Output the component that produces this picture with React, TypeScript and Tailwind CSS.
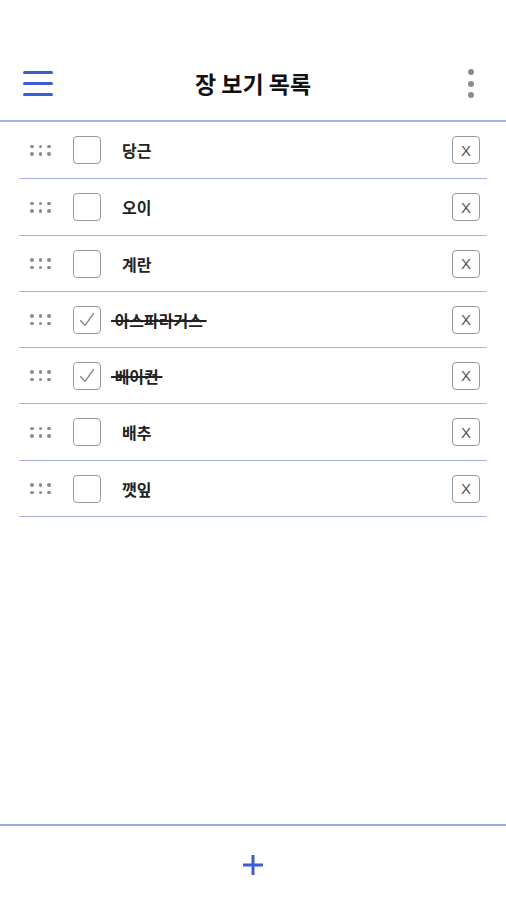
import { useState } from 'react'

type Item = { id: number; name: string; done: boolean }

const INITIAL: Item[] = [
  { id: 1, name: '당근', done: false },
  { id: 2, name: '오이', done: false },
  { id: 3, name: '계란', done: false },
  { id: 4, name: '아스파라거스', done: true },
  { id: 5, name: '베이컨', done: true },
  { id: 6, name: '배추', done: false },
  { id: 7, name: '깻잎', done: false },
]

const ROW_H = ['h-[57px]', 'h-[57px]', 'h-[56px]', 'h-[56px]', 'h-[56px]', 'h-[57px]', 'h-[56px]']

function DragHandle() {
  return (
    <div className="grid grid-cols-3 gap-x-[5px] gap-y-[4px] w-[21px] shrink-0">
      {[0, 1, 2, 3, 4, 5].map((i) => (
        <span key={i} className="w-[3.5px] h-[3.5px] rounded-full bg-[#8a8a8a]" />
      ))}
    </div>
  )
}

export default function App() {
  const [items, setItems] = useState<Item[]>(INITIAL)

  const toggle = (id: number) =>
    setItems((prev) => prev.map((it) => (it.id === id ? { ...it, done: !it.done } : it)))
  const remove = (id: number) => setItems((prev) => prev.filter((it) => it.id !== id))

  return (
    <div
      className="h-[900px] flex flex-col bg-white text-[#111]"
      style={{ fontFamily: '"Noto Sans CJK KR", "Noto Sans", sans-serif' }}
    >
      {/* ── Header ─────────────────────────────────────────────── */}
      <header className="mt-[47px] h-[75px] shrink-0 flex items-center px-[23px] border-b-2 border-[#a7b0e2]">
        <button className="w-[30px] flex flex-col gap-[8px]">
          <span className="block h-[3px] rounded-full bg-[#3d5bd6]" />
          <span className="block h-[3px] rounded-full bg-[#3d5bd6]" />
          <span className="block h-[3px] rounded-full bg-[#3d5bd6]" />
        </button>
        <h1 className="flex-1 text-center text-[23px] font-bold leading-none">장 보기 목록</h1>
        <button className="w-[30px] flex flex-col items-end gap-[5.5px] pr-[9px]">
          <span className="block w-[6px] h-[6px] rounded-full bg-[#8c8c8c]" />
          <span className="block w-[6px] h-[6px] rounded-full bg-[#8c8c8c]" />
          <span className="block w-[6px] h-[6px] rounded-full bg-[#8c8c8c]" />
        </button>
      </header>

      {/* ── List ───────────────────────────────────────────────── */}
      <ul className="flex-1 mx-[19px]">
        {items.map((it, i) => (
          <li key={it.id} className={`${ROW_H[i] ?? 'h-[56px]'} flex items-center border-b border-[#a9b1e3]`}>
            <div className="pl-[11px]">
              <DragHandle />
            </div>
            <button
              onClick={() => toggle(it.id)}
              className="ml-[22px] w-[28px] h-[28px] shrink-0 rounded-[4px] border-[1.5px] border-[#9a9a9a] flex items-center justify-center"
            >
              {it.done && (
                <svg width="20" height="20" viewBox="0 0 20 20" fill="none">
                  <path d="M3.5 10.5 L8 15.5 L16.5 3.5" stroke="#8a8a8a" strokeWidth="1.3" strokeLinecap="round" strokeLinejoin="round" />
                </svg>
              )}
            </button>
            {it.done ? (
              <span className="ml-[10px] flex-1 text-[16px] font-bold line-through decoration-[1.5px] text-[#222]">
                {'\u00a0' + it.name + '\u00a0'}
              </span>
            ) : (
              <span className="ml-[21px] flex-1 text-[16px] font-bold text-[#222]">{it.name}</span>
            )}
            <button
              onClick={() => remove(it.id)}
              className="mr-[7px] w-[28px] h-[28px] shrink-0 rounded-[4px] border-[1.5px] border-[#9a9a9a] flex items-center justify-center text-[15px] text-[#555] leading-none"
              style={{ fontFamily: '"Liberation Sans", sans-serif' }}
            >
              X
            </button>
          </li>
        ))}
      </ul>

      {/* ── Footer ─────────────────────────────────────────────── */}
      <footer className="h-[76px] shrink-0 border-t-[2.5px] border-[#a0aae0] flex items-center justify-center pt-[4px]">
        <button className="w-[22px] h-[22px] flex items-center justify-center">
          <svg width="22" height="22" viewBox="0 0 22 22">
            <path d="M11 1 V21 M1 11 H21" stroke="#3d5bd6" strokeWidth="3" />
          </svg>
        </button>
      </footer>
    </div>
  )
}
